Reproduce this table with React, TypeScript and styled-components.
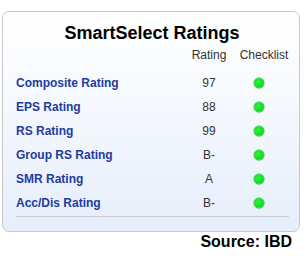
import React from "react";
import styled, { createGlobalStyle } from "styled-components";

const Global = createGlobalStyle`
  html, body { margin: 0; padding: 0; background: #ffffff; }
  body { font-family: "Liberation Sans", Arial, sans-serif; }
`;

const Page = styled.div`
  width: 307px;
  height: 258px;
  padding: 11px 0 0 2px;
  box-sizing: border-box;
`;

const Card = styled.div`
  width: 298px;
  height: 221px;
  box-sizing: border-box;
  border: 1px solid #c8c8c8;
  border-radius: 7px;
  background: linear-gradient(to bottom, #ffffff 0%, #f6f9fe 40%, #e6eefb 100%);
  padding: 11px 9px 0 13px;
`;

const Title = styled.div`
  font-weight: bold;
  font-size: 18px;
  color: #000;
  text-align: center;
  line-height: 21px;
  padding-right: 2px;
`;

const Grid = styled.div`
  display: grid;
  grid-template-columns: 1fr 38px 62px;
`;

const HeadCell = styled.div<{ $shift?: number }>`
  font-size: 12px;
  color: #333;
  line-height: 14px;
  padding-top: 4px;
  text-align: center;
  white-space: nowrap;
  transform: translateX(${(p) => p.$shift ?? 0}px);
`;

const Label = styled.div`
  font-size: 12px;
  font-weight: bold;
  color: #1d3c9f;
  height: 24px;
  line-height: 24px;
`;

const Value = styled.div`
  font-size: 12px;
  color: #333;
  height: 24px;
  line-height: 24px;
  text-align: center;
`;

const DotCell = styled.div`
  height: 24px;
  display: flex;
  align-items: center;
  justify-content: center;
`;

const Dot = styled.span`
  width: 10px;
  height: 10px;
  border-radius: 50%;
  background: radial-gradient(circle at 40% 40%, #33f044 0%, #12dc24 60%, #0cc01c 100%);
  box-shadow: 0 0 0 0.5px #18b828;
`;

const Rows = styled.div`
  padding-top: 9px;
`;

const Divider = styled.div`
  height: 1px;
  background: #c9ccd2;
  margin: 1px 1px 0 0;
`;

const Source = styled.div`
  font-weight: bold;
  font-size: 16px;
  color: #000;
  text-align: right;
  padding-right: 15px;
  line-height: 18px;
  padding-top: 1px;
`;

const data: [string, string][] = [
  ["Composite Rating", "97"],
  ["EPS Rating", "88"],
  ["RS Rating", "99"],
  ["Group RS Rating", "B-"],
  ["SMR Rating", "A"],
  ["Acc/Dis Rating", "B-"],
];

export default function App() {
  return (
    <Page>
      <Global />
      <Card>
        <Title>SmartSelect Ratings</Title>
        <Grid>
          <div />
          <HeadCell>Rating</HeadCell>
          <HeadCell $shift={5}>Checklist</HeadCell>
        </Grid>
        <Rows>
          <Grid>
            {data.map(([l, v]) => (
              <React.Fragment key={l}>
                <Label>{l}</Label>
                <Value>{v}</Value>
                <DotCell>
                  <Dot />
                </DotCell>
              </React.Fragment>
            ))}
          </Grid>
        </Rows>
        <Divider />
      </Card>
      <Source>Source: IBD</Source>
    </Page>
  );
}
